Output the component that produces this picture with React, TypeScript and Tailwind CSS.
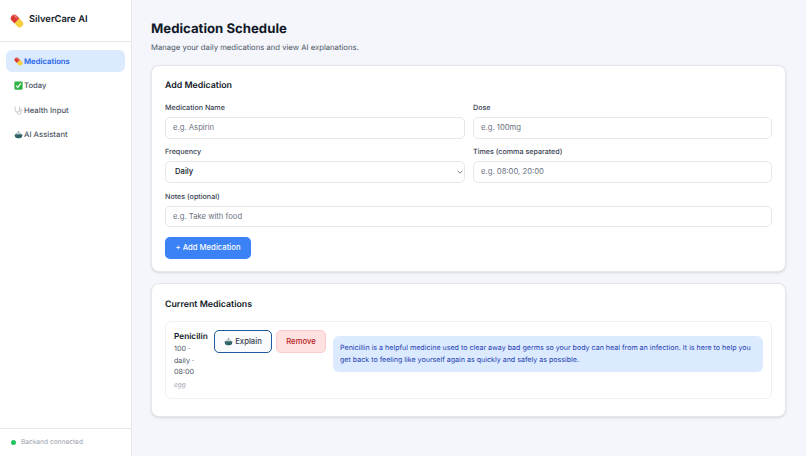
function Pill({ size }: { size: number }) {
  return (
    <svg width={size} height={size} viewBox="0 0 24 24" className="shrink-0">
      <g transform="rotate(45 12 12)">
        <path d="M12 6H5.500a6 6 0 0 0 0 12H12z" fill="#d93a32" />
        <path d="M12 6h6.500a6 6 0 0 1 0 12H12z" fill="#f7cf3f" />
        <rect x="1" y="7.500" width="8" height="2" rx="1" fill="#f08a80" />
      </g>
    </svg>
  );
}
function Bowl({ size }: { size: number }) {
  return (
    <svg width={size} height={size} viewBox="0 0 24 24" className="shrink-0">
      <path d="M5 11a7 6 0 0 1 14 0z" fill="#c3cfcd" />
      <circle cx="12" cy="4.500" r="1.800" fill="#6f8a8a" />
      <path d="M2 11h20v3a8 8 0 0 1-8 8h-4a8 8 0 0 1-8-8z" fill="#2f6367" />
    </svg>
  );
}
function Steth({ size }: { size: number }) {
  return (
    <svg width={size} height={size} viewBox="0 0 24 24" className="shrink-0" fill="none" stroke="#b4bac1" strokeWidth="2">
      <path d="M4 2H3v8a6 6 0 0 0 12 0V2h-1" />
      <path d="M9 16v2a4.500 4.500 0 0 0 9 0v-3" />
      <circle cx="18" cy="11.500" r="3" />
    </svg>
  );
}
function Check({ size }: { size: number }) {
  return (
    <svg width={size} height={size} viewBox="0 0 24 24" className="shrink-0">
      <rect x="1" y="1" width="22" height="22" rx="3" fill="#2fb344" />
      <path d="M6 12.500l4 4.500L18 6.500" fill="none" stroke="#fff" strokeWidth="3.200" />
    </svg>
  );
}
function Nav({ icon, label, active }: { icon: React.ReactNode; label: string; active?: boolean }) {
  return (
    <div className={active ? "flex h-[22px] items-center gap-[1px] rounded-[6px] bg-[#dbeafe] px-[8px] pt-[1px] text-[7.7px] font-semibold text-[#2563eb]" : "flex h-[22px] items-center gap-[1px] rounded-[6px] px-[8px] pt-[1px] text-[7.7px] font-medium text-[#4b5563]"}>
      {icon}
      <span>{label}</span>
    </div>
  );
}
function Field({ label, placeholder, className }: { label: string; placeholder: string; className?: string }) {
  return (
    <div className={className}>
      <label className="mb-[4px] block text-[7.15px] leading-[10px] font-medium text-[#374151]">{label}</label>
      <input readOnly placeholder={placeholder} className="block h-[21.500px] w-full rounded-[5px] border border-[#e5e7eb] bg-white px-[7px] text-[7.7px] outline-none placeholder:text-[#6b7280]" />
    </div>
  );
}
export default function App() {
  return (
    <div className="flex h-[456px] w-[806px] overflow-hidden bg-[#f4f6fb] text-[#111827] [font-family:Inter,sans-serif] [text-rendering:geometricPrecision]">
      <aside className="flex w-[132px] shrink-0 flex-col border-r border-[#e5e7eb] bg-white">
        <div className="flex h-[42px] items-center gap-[5px] border-b border-[#e5e7eb] pl-[10px] text-[9.35px] font-semibold">
          <Pill size={14} />
          <span>SilverCare AI</span>
        </div>
        <nav className="flex flex-1 flex-col gap-[2.400px] px-[6px] pt-[8px] pr-[6px]">
          <Nav icon={<Pill size={9} />} label="Medications" active />
          <Nav icon={<Check size={9} />} label="Today" />
          <Nav icon={<Steth size={9} />} label="Health Input" />
          <Nav icon={<Bowl size={9} />} label="AI Assistant" />
        </nav>
        <div className="flex h-[28px] items-center gap-[5px] border-t border-[#e5e7eb] pl-[11px] text-[6.6px] text-[#9ca3af]">
          <span className="size-[5px] rounded-full bg-[#22c55e]" />
          Backend connected
        </div>
      </aside>
      <main className="flex-1 pt-[20px] pr-[20px] pl-[19px]">
        <h1 className="text-[13.2px] leading-[18px] font-bold">Medication Schedule</h1>
        <p className="mt-[4px] text-[7.7px] leading-[11px] text-[#4b5563]">Manage your daily medications and view AI explanations.</p>
        <section className="mt-[12px] h-[207px] rounded-[8px] border border-[#e5e7eb] bg-white px-[13px] pt-[14px] shadow-sm">
          <h2 className="mb-[11px] text-[8.8px] leading-[12px] font-semibold">Add Medication</h2>
          <div className="grid grid-cols-[300px_1fr] gap-x-[8px] gap-y-[8.500px]">
            <Field label="Medication Name" placeholder="e.g. Aspirin" />
            <Field label="Dose" placeholder="e.g. 100mg" />
            <div>
              <label className="mb-[4px] block text-[7.15px] leading-[10px] font-medium text-[#374151]">Frequency</label>
              <div className="relative">
                <select className="block h-[22px] w-full appearance-none rounded-[5px] border border-[#e5e7eb] bg-white px-[9px] text-[7.7px] font-medium outline-none">
                  <option>Daily</option>
                </select>
                <svg width="6" height="6" viewBox="0 0 10 10" className="absolute top-[8px] right-[2px]" fill="none" stroke="#6b7280" strokeWidth="1.500"><path d="M1 3l4 4 4-4" /></svg>
              </div>
            </div>
            <Field label="Times (comma separated)" placeholder="e.g. 08:00, 20:00" />
            <Field className="col-span-2" label="Notes (optional)" placeholder="e.g. Take with food" />
          </div>
          <button className="mt-[9.500px] h-[22px] w-[86px] rounded-[5px] bg-[#3b82f6] text-[7.7px] font-medium text-white">+ Add Medication</button>
        </section>
        <section className="mt-[11px] h-[134px] rounded-[8px] border border-[#e5e7eb] bg-white px-[13px] pt-[14px] shadow-sm">
          <h2 className="mb-[10.500px] pt-[0.500px] text-[8.8px] leading-[12px] font-semibold">Current Medications</h2>
          <div className="flex h-[78px] items-start rounded-[6px] border border-[#f0f1f4] p-[8px]">
            <div className="mr-[6px] w-[34px] shrink-0">
              <div className="text-[8.25px] leading-[12px] font-semibold whitespace-nowrap">Penicilin</div>
              <div className="mt-[1px] text-[7.15px] leading-[11.500px] text-[#4b5563]">100 ·<br />daily ·<br />08:00</div>
              <div className="mt-[2px] text-[6.6px] leading-[10px] text-[#9ca3af] italic">egg</div>
            </div>
            <button className="mr-[4px] flex h-[23px] w-[58px] items-center justify-center gap-[2px] rounded-[5px] border-[1.500px] border-[#1e5a9e] bg-[#f9fafb] text-[7.7px] font-medium text-[#374151]"><Bowl size={9} />Explain</button>
            <button className="mr-[7px] h-[23px] w-[50px] rounded-[5px] border border-[#fecaca] bg-[#fee2e2] text-[7.7px] font-medium text-[#b91c1c]">Remove</button>
            <div className="mt-[5.500px] flex-1 rounded-[6px] bg-[#dbeafe] px-[7px] py-[6.600px] text-[7.1px] leading-[11.440px] text-[#1e40af]">Penicillin is a helpful medicine used to clear away bad germs so your body can heal from an infection. It is here to help you get back to feeling like yourself again as quickly and safely as possible.</div>
          </div>
        </section>
      </main>
    </div>
  );
}
